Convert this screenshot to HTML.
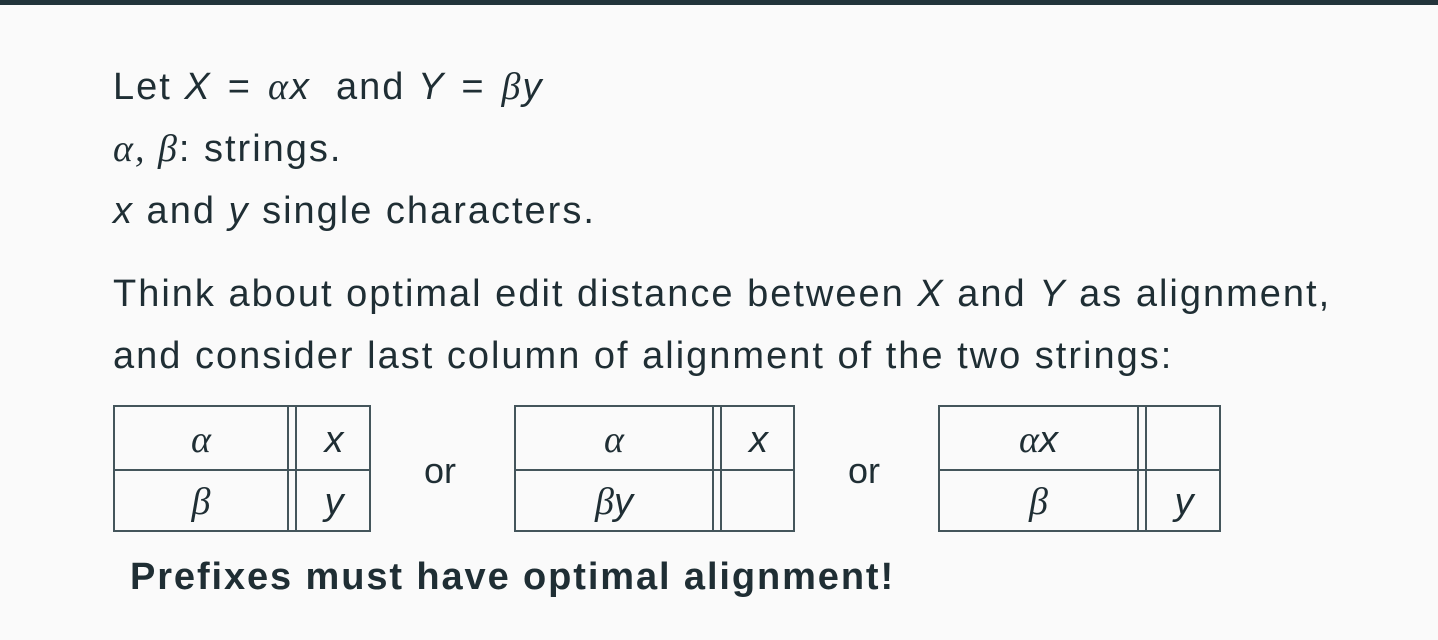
<!DOCTYPE html>
<html><head><meta charset="utf-8"><style>
body{margin:0;width:1438px;height:640px;background:#fafafa;position:relative;overflow:hidden;font-family:"Liberation Sans",sans-serif;color:#1f2e34}
.bar{position:absolute;left:0;top:0;width:1438px;height:5px;background:#22343b}
.l{position:absolute;left:113px;font-size:38px;white-space:nowrap;line-height:1;letter-spacing:2px}
i{font-style:italic}
.g{font-family:"Liberation Serif",serif;font-style:italic}
.eq{margin:0 16px}
.t{position:absolute;top:405px;height:127px;border:2px solid #44555b;box-sizing:border-box}
.h{position:absolute;left:0;right:0;top:62px;border-top:2px solid #44555b}
.v{position:absolute;top:0;bottom:0;width:6px;border-left:2px solid #44555b;border-right:2px solid #44555b}
.c{position:absolute;font-size:38px;text-align:center;line-height:1}
.or{position:absolute;top:450px;font-size:36px}
</style></head><body>
<div class="bar"></div>
<div class="l" style="top:68px">Let <i>X</i><span class="eq">=</span><span class="g">α</span><i>x</i>&nbsp; and <i>Y</i><span class="eq">=</span><span class="g">β</span><i>y</i></div>
<div class="l" style="top:130px"><span class="g">α, β</span>: strings.</div>
<div class="l" style="top:192px"><i>x</i> and <i>y</i> single characters.</div>
<div class="l" style="top:275px">Think about optimal edit distance between <i>X</i> and <i>Y</i> as alignment,</div>
<div class="l" style="top:337px">and consider last column of alignment of the two strings:</div>

<div class="t" style="left:113px;width:258px"><div class="h"></div><div class="v" style="left:172px"></div>
<div class="c g" style="left:0;width:172px;top:14px">α</div><div class="c" style="left:182px;width:74px;top:14px"><i>x</i></div>
<div class="c g" style="left:0;width:172px;top:76px">β</div><div class="c" style="left:182px;width:74px;top:76px"><i>y</i></div></div>
<div class="or" style="left:424px">or</div>

<div class="t" style="left:514px;width:281px"><div class="h"></div><div class="v" style="left:196px"></div>
<div class="c g" style="left:0;width:196px;top:14px">α</div><div class="c" style="left:206px;width:73px;top:14px"><i>x</i></div>
<div class="c" style="left:0;width:196px;top:76px"><span class="g">β</span><i>y</i></div></div>
<div class="or" style="left:848px">or</div>

<div class="t" style="left:938px;width:283px"><div class="h"></div><div class="v" style="left:197px"></div>
<div class="c" style="left:0;width:197px;top:14px"><span class="g">α</span><i>x</i></div>
<div class="c g" style="left:0;width:197px;top:76px">β</div><div class="c" style="left:207px;width:74px;top:76px"><i>y</i></div></div>

<div class="l" style="top:558px;left:130px;font-weight:bold;letter-spacing:1.9px">Prefixes must have optimal alignment!</div>
</body></html>
